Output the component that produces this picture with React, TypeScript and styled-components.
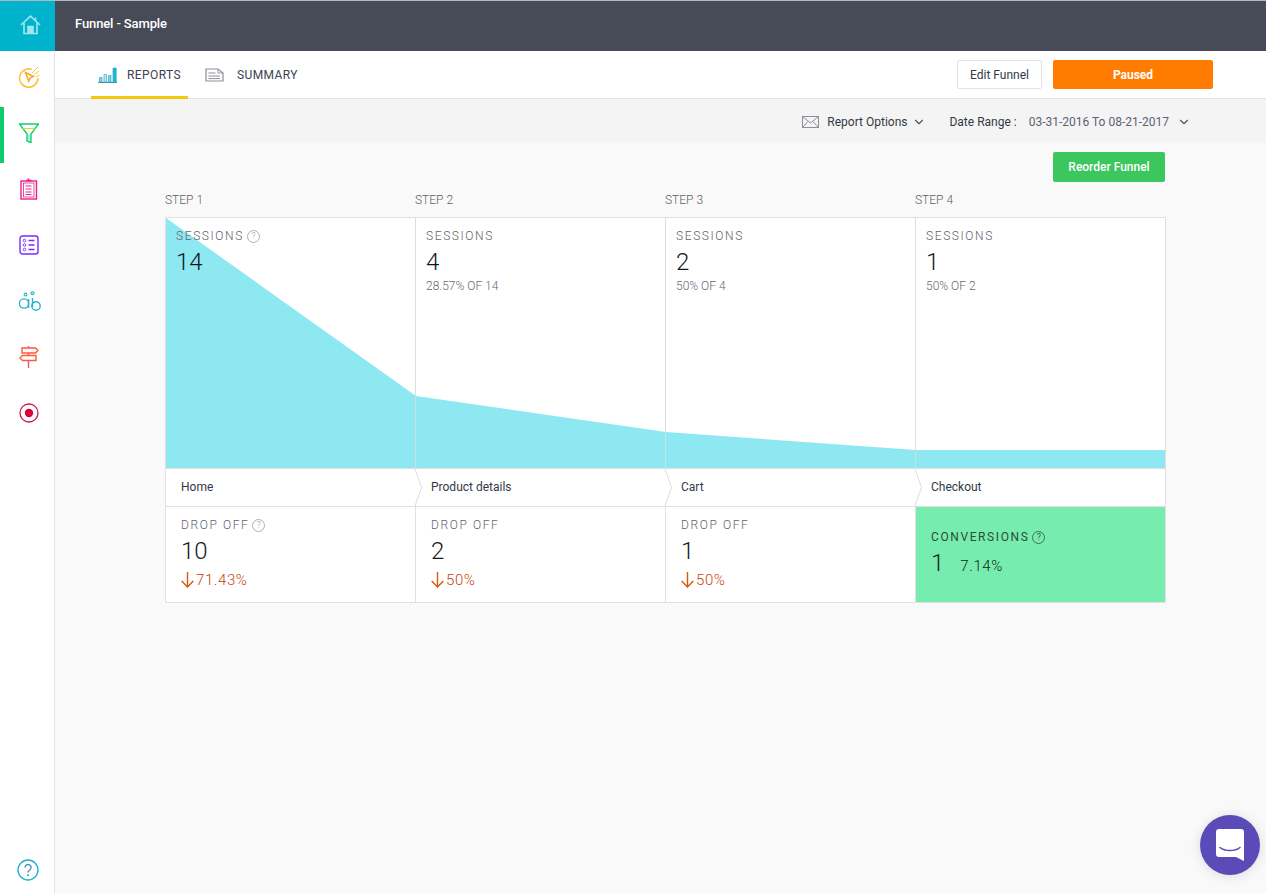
import React from 'react';
import styled, { createGlobalStyle } from 'styled-components';
import { ChevronDown } from 'lucide-react';

const GlobalStyle = createGlobalStyle`
    html, body {
        margin: 0;
        padding: 0;
        height: 100%;
        background: #f9f9f9;
        font-family: Roboto, "Liberation Sans", sans-serif;
        overflow: hidden;
    }
    * { box-sizing: border-box; }
`;

const Page = styled.div`
    display: flex;
    width: 1266px;
    height: 893px;
    border-top: 1px solid #b5b7bb;
`;

const Sidebar = styled.nav`
    width: 55px;
    flex: none;
    display: flex;
    flex-direction: column;
    background: #fff;
    border-right: 1px solid #e4e4e4;
`;

const HomeLink = styled.div`
    height: 50px;
    margin-right: -1px;
    padding: 0 0 2px 5px;
    background: #00b2cc;
    display: flex;
    align-items: center;
    justify-content: center;
`;

const NavItem = styled.div<{ $active?: boolean }>`
    height: 56px;
    display: flex;
    align-items: center;
    justify-content: center;
    border-left: 4px solid ${p => (p.$active ? '#0ccb6b' : 'transparent')};
    padding-bottom: 4px;
`;

const SidebarSpacer = styled.div`
    flex: 1;
`;

const HelpLink = styled.div`
    height: 34px;
    padding-left: 2px;
    display: flex;
    align-items: flex-start;
    justify-content: center;
`;

const Main = styled.main`
    flex: 1;
    min-width: 0;
    display: flex;
    flex-direction: column;
`;

const Header = styled.header`
    height: 50px;
    background: #464b57;
    color: #fff;
    display: flex;
    align-items: center;
    padding: 0 0 6px 20px;
    font-size: 13px;
    font-weight: 500;
    letter-spacing: -0.12px;
`;

const TabBar = styled.div`
    height: 48px;
    background: #fff;
    border-bottom: 1px solid #e2e2e2;
    display: flex;
    align-items: stretch;
    padding: 0 53px 0 36px;
`;

const Tab = styled.div<{ $active?: boolean; $gap: number }>`
    display: flex;
    align-items: center;
    gap: ${p => p.$gap}px;
    padding: 3px 7px 0;
    margin-right: 10px;
    font-size: 12px;
    letter-spacing: 0.4px;
    color: #3c4250;
    border-bottom: 3px solid ${p => (p.$active ? '#f3c80f' : 'transparent')};
    margin-bottom: -1px;
`;

const TabActions = styled.div`
    margin-left: auto;
    display: flex;
    align-items: center;
    gap: 11px;
    padding-bottom: 1px;
`;

const EditButton = styled.button`
    width: 85px;
    height: 29px;
    padding: 2px 0 0;
    background: #fff;
    border: 1px solid #e2e2e2;
    border-radius: 2px;
    font: 400 12px Roboto, sans-serif;
    color: #333a47;
`;

const StatusButton = styled.button`
    width: 160px;
    height: 29px;
    padding: 2px 0 0;
    background: #ff7c00;
    border: none;
    border-radius: 2px;
    font: 700 12px Roboto, sans-serif;
    color: #fff;
`;

const FilterBar = styled.div`
    height: 43px;
    background: #f4f4f4;
    display: flex;
    align-items: center;
    justify-content: flex-end;
    padding: 2px 75px 0 0;
    font-size: 12px;
    color: #333a47;
`;

const FilterItem = styled.div`
    display: flex;
    align-items: center;
`;

const MailIcon = styled.svg`
    margin-right: 8px;
`;

const ReportChevron = styled(ChevronDown)`
    margin-left: 5px;
    color: #555;
`;

const DateChevron = styled(ChevronDown)`
    margin-left: 8px;
    color: #555;
`;

const DateLabel = styled.span`
    margin-left: 23px;
    margin-right: 12px;
`;

const DateValue = styled.span`
    color: #5d6270;
`;

const Content = styled.section`
    flex: 1;
    padding: 10px 101px 0 110px;
`;

const ContentActions = styled.div`
    display: flex;
    justify-content: flex-end;
`;

const ReorderButton = styled.button`
    width: 112px;
    height: 30px;
    background: #3cc65e;
    border: none;
    border-radius: 2px;
    font: 500 12px Roboto, sans-serif;
    color: #fff;
`;

const StepLabels = styled.div`
    display: grid;
    grid-template-columns: repeat(4, 250px);
    height: 35px;
    align-items: flex-end;
    padding-bottom: 10px;
`;

const StepLabel = styled.div`
    font-size: 12px;
    font-weight: 300;
    line-height: 14px;
    color: #5f5f5f;
`;

const Table = styled.div`
    position: relative;
    width: 1001px;
    border: 1px solid #e0e0e0;
    background: #fff;
`;

const ChartFill = styled.svg`
    position: absolute;
    left: 0;
    top: 0;
`;

const Row = styled.div<{ $height: number }>`
    position: relative;
    display: grid;
    grid-template-columns: 249px 250px 250px 250px;
    height: ${p => p.$height}px;
`;

const SessionCell = styled.div`
    padding: 11px 10px 0 10px;
    & + & {
        border-left: 1px solid rgba(215, 218, 220, 0.9);
    }
`;

const CellLabel = styled.div<{ $dark?: boolean }>`
    display: flex;
    align-items: center;
    gap: 3px;
    font-size: 12px;
    font-weight: ${p => (p.$dark ? 400 : 300)};
    line-height: 14px;
    letter-spacing: 1.6px;
    color: ${p => (p.$dark ? '#2e4a3a' : '#5f636b')};
`;

const HintIcon = styled.span<{ $dark?: boolean }>`
    width: 13px;
    height: 13px;
    border: 1px solid ${p => (p.$dark ? '#4b6b58' : '#b0b0b0')};
    border-radius: 50%;
    font-size: 9px;
    line-height: 11px;
    text-align: center;
    letter-spacing: 0;
    color: ${p => (p.$dark ? '#3d5c4a' : '#a0a0a0')};
`;

const BigNumber = styled.div`
    margin-top: 5px;
    font-size: 24px;
    font-weight: 300;
    line-height: 28px;
    color: #14181d;
`;

const SubText = styled.div`
    margin-top: 3px;
    font-size: 12px;
    font-weight: 300;
    line-height: 14px;
    color: #666a70;
`;

const LabelRow = styled(Row)`
    border-top: 1px solid #e0e0e0;
    border-bottom: 1px solid #e0e0e0;
`;

const PageLabel = styled.div<{ $first?: boolean }>`
    position: relative;
    display: flex;
    align-items: center;
    padding: 0 0 2px ${p => (p.$first ? 15 : 16)}px;
    font-size: 12px;
    color: #333a47;
`;

const Chevron = styled.svg`
    position: absolute;
    left: -1px;
    top: 0;
`;

const DropCell = styled.div`
    padding: 11px 15px 0 15px;
    & + & {
        border-left: 1px solid #e0e0e0;
    }
`;

const DropPercent = styled.div`
    margin-top: 5px;
    display: flex;
    align-items: center;
    gap: 2px;
    font-size: 15px;
    font-weight: 300;
    line-height: 20px;
    color: #c93f08;
    letter-spacing: 0.6px;
`;

const ConversionCell = styled.div`
    padding: 23px 15px 0 15px;
    background: #76edae;
    border-left: 1px solid #e0e0e0;
`;

const ConversionValues = styled.div`
    display: flex;
    align-items: baseline;
    margin-top: 5px;
    line-height: 28px;
    font-size: 24px;
    font-weight: 300;
    color: #14261d;
`;

const ConversionPercent = styled.span`
    margin-left: 16px;
    font-size: 15px;
    font-weight: 300;
    letter-spacing: 0.6px;
`;

const ChatBubble = styled.div`
    position: fixed;
    right: 6px;
    bottom: 18px;
    width: 60px;
    height: 60px;
    border-radius: 50%;
    background: #5a4bb8;
    box-shadow: 0 1px 12px rgba(0, 0, 0, 0.12);
    display: flex;
    align-items: center;
    justify-content: center;
`;

const HomeIcon = () => (
    <svg width="21" height="20" viewBox="0 0 21 20" fill="none" stroke="#9fe6f0" strokeWidth="1.6">
        <path d="M1 10 10.5 1.2 20 10" />
        <path d="M4 8v10.5h13V8" />
        <path d="M8 18.5V11.5h5v7" fill="#9fe6f0" />
        <path d="M15.5 2.5v3" />
    </svg>
);

const GoalIcon = () => (
    <svg width="22" height="22" viewBox="0 0 22 22" fill="none" stroke="#fdc12f" strokeWidth="1.5">
        <path d="M14 3.4A9.2 9.2 0 1 0 20 12" />
        <path d="M7.5 6.5l8 4-3.3 1.3-1.4 3.4z" stroke="#f9a52a" />
        <path d="M14 7l6-6M16.5 8.5 21 5M18 11l3.5-2" strokeWidth="1" />
    </svg>
);

const FunnelIcon = () => (
    <svg width="20" height="20" viewBox="0 0 20 20" fill="none" stroke="#0fcf6e" strokeWidth="1.4">
        <path d="M.5 1h19l-7.5 10v8.5l-4-1.5v-7z" />
        <path d="M4 5.5h12" stroke="#e4d52c" strokeWidth="1.2" />
        <path d="M10 11.5v6" stroke="#5fd8e0" strokeWidth="1.2" />
    </svg>
);

const ClipboardIcon = () => (
    <svg width="18" height="22" viewBox="0 0 18 22" fill="none" stroke="#ec1e8b" strokeWidth="1.4">
        <rect x="1" y="3" width="15.5" height="18" />
        <rect x="3.5" y="5" width="10.5" height="14" strokeWidth="0.8" />
        <path d="M6 2.5h5.5M8.5.5v2" strokeWidth="1.6" />
        <path d="M5.5 8h6M5.5 11h6M5.5 14h6M5.5 16.5h6" strokeWidth="1" />
    </svg>
);

const SurveyIcon = () => (
    <svg width="20" height="20" viewBox="0 0 20 20" fill="none" stroke="#7a2cff" strokeWidth="1.4">
        <rect x="1" y="1" width="18" height="18" rx="2.5" />
        <circle cx="5.5" cy="5.5" r="1.3" strokeWidth="0.9" />
        <circle cx="5.5" cy="10" r="1.3" strokeWidth="0.9" />
        <circle cx="5.5" cy="14.5" r="1.3" strokeWidth="0.9" />
        <path d="M9.5 5.5h6M9.5 10h6M9.5 14.5h6" />
    </svg>
);

const AbIcon = () => (
    <svg width="23" height="22" viewBox="0 0 23 22" fill="none" stroke="#28b3cc" strokeWidth="1.4">
        <circle cx="6" cy="13.5" r="4.6" />
        <path d="M10.6 9v9" />
        <path d="M14.5 8v9" />
        <circle cx="18" cy="16" r="4.2" />
        <circle cx="7.5" cy="4.5" r="1.4" strokeWidth="1.1" />
        <circle cx="14.5" cy="3.2" r="1.6" fill="#8fdde8" strokeWidth="1" />
    </svg>
);

const SignpostIcon = () => (
    <svg width="20" height="22" viewBox="0 0 20 22" fill="none" stroke="#ff5a32" strokeWidth="1.4">
        <path d="M3 2h13.5l2.5 2.5L16.5 7H3z" />
        <path d="M17 9.5H3.5L1 12l2.5 2.5H17z" />
        <path d="M9.5 0v2M9.5 7v2.5M9.5 14.5V22" stroke="#f5508a" />
    </svg>
);

const RecordIcon = () => (
    <svg width="20" height="20" viewBox="0 0 20 20">
        <circle cx="10" cy="10" r="9" fill="none" stroke="#d8124d" strokeWidth="1.3" />
        <circle cx="10" cy="10" r="4.2" fill="#d8003c" />
    </svg>
);

const HelpIcon = () => (
    <svg width="22" height="22" viewBox="0 0 22 22">
        <circle cx="11" cy="11" r="10" fill="none" stroke="#1fb4d2" strokeWidth="1.4" />
        <path d="M8 8.4a3 3 0 1 1 4.6 2.6c-1 .7-1.6 1.2-1.6 2.5" fill="none" stroke="#4a8fa6" strokeWidth="1.4" />
        <circle cx="11" cy="16.2" r="1" fill="#4a8fa6" />
    </svg>
);

const ReportsIcon = () => (
    <svg width="20" height="16" viewBox="0 0 20 16" fill="none">
        <path d="M0 15.4h19" stroke="#3a7f92" strokeWidth="1" />
        <path d="M1.5 15V10.5h2.5V15z" fill="#7fd0e0" stroke="#2cb0cc" strokeWidth="0.7" />
        <path d="M6 15V7.5h2.5V15z" fill="#bfe9f1" stroke="#2cb0cc" strokeWidth="0.7" />
        <path d="M10.5 15V8.5h2.5V15z" fill="#7fd0e0" stroke="#2cb0cc" strokeWidth="0.7" />
        <path d="M15 15V1h3.2v14z" fill="#1fb4d2" stroke="#2cb0cc" strokeWidth="0.7" />
    </svg>
);

const SummaryIcon = () => (
    <svg width="19" height="14" viewBox="0 0 19 14" fill="none" stroke="#8a8f99" strokeWidth="1.2">
        <path d="M1 1h12l5 4v8H1z" />
        <path d="M13 1v4h5" strokeWidth="0.9" />
        <path d="M3.5 5h7M3.5 8h11.5M3.5 10.6h11.5" strokeWidth="1" />
    </svg>
);

const DropArrow = () => (
    <svg width="13" height="16" viewBox="0 0 13 16" fill="none" stroke="#d9570f" strokeWidth="1.4">
        <path d="M6.5 0v15M.7 9l5.8 6 5.8-6" />
    </svg>
);

const steps = [
    { name: 'Home', sessions: 14, sub: '', drop: 10, dropPct: '71.43%' },
    { name: 'Product details', sessions: 4, sub: '28.57% OF 14', drop: 2, dropPct: '50%' },
    { name: 'Cart', sessions: 2, sub: '50% OF 4', drop: 1, dropPct: '50%' },
    { name: 'Checkout', sessions: 1, sub: '50% OF 2', drop: null, dropPct: '' },
];

const App = () => {
    return (
        <>
            <GlobalStyle />
            <Page>
                <Sidebar>
                    <HomeLink>
                        <HomeIcon />
                    </HomeLink>
                    <NavItem><GoalIcon /></NavItem>
                    <NavItem $active><FunnelIcon /></NavItem>
                    <NavItem><ClipboardIcon /></NavItem>
                    <NavItem><SurveyIcon /></NavItem>
                    <NavItem><AbIcon /></NavItem>
                    <NavItem><SignpostIcon /></NavItem>
                    <NavItem><RecordIcon /></NavItem>
                    <SidebarSpacer />
                    <HelpLink><HelpIcon /></HelpLink>
                </Sidebar>
                <Main>
                    <Header>Funnel - Sample</Header>
                    <TabBar>
                        <Tab $active $gap={9}>
                            <ReportsIcon />
                            REPORTS
                        </Tab>
                        <Tab $gap={13}>
                            <SummaryIcon />
                            SUMMARY
                        </Tab>
                        <TabActions>
                            <EditButton>Edit Funnel</EditButton>
                            <StatusButton>Paused</StatusButton>
                        </TabActions>
                    </TabBar>
                    <FilterBar>
                        <FilterItem>
                            <MailIcon width="17" height="12" viewBox="0 0 17 12" fill="none" stroke="#8a8f99" strokeWidth="1">
                                <rect x="0.5" y="0.5" width="16" height="11" />
                                <path d="M.5.5 8.5 7l8-6.5M.5 11.5 6 5.5M16.5 11.5 11 5.5" />
                            </MailIcon>
                            Report Options
                            <ReportChevron size={14} />
                        </FilterItem>
                        <FilterItem>
                            <DateLabel>Date Range :</DateLabel>
                            <DateValue>03-31-2016 To 08-21-2017</DateValue>
                            <DateChevron size={14} />
                        </FilterItem>
                    </FilterBar>
                    <Content>
                        <ContentActions>
                            <ReorderButton>Reorder Funnel</ReorderButton>
                        </ContentActions>
                        <StepLabels>
                            {steps.map((s, i) => (
                                <StepLabel key={s.name}>STEP {i + 1}</StepLabel>
                            ))}
                        </StepLabels>
                        <Table>
                            <ChartFill width="999" height="250" viewBox="0 0 999 250">
                                <path d="M0 0 250 178 500 214 750 232 999 232V250H0Z" fill="#8ee8f2" />
                            </ChartFill>
                            <Row $height={250}>
                                {steps.map((s, i) => (
                                    <SessionCell key={s.name}>
                                        <CellLabel>
                                            SESSIONS
                                            {i === 0 && <HintIcon>?</HintIcon>}
                                        </CellLabel>
                                        <BigNumber>{s.sessions}</BigNumber>
                                        {s.sub && <SubText>{s.sub}</SubText>}
                                    </SessionCell>
                                ))}
                            </Row>
                            <LabelRow $height={39}>
                                {steps.map((s, i) => (
                                    <PageLabel key={s.name} $first={i === 0}>
                                        {i > 0 && (
                                            <Chevron width="9" height="37" viewBox="0 0 9 37" fill="none" stroke="#dcdcdc">
                                                <path d="M1 0 7.5 18.5 1 37" />
                                            </Chevron>
                                        )}
                                        {s.name}
                                    </PageLabel>
                                ))}
                            </LabelRow>
                            <Row $height={95}>
                                {steps.slice(0, 3).map((s, i) => (
                                    <DropCell key={s.name}>
                                        <CellLabel>
                                            DROP OFF
                                            {i === 0 && <HintIcon>?</HintIcon>}
                                        </CellLabel>
                                        <BigNumber>{s.drop}</BigNumber>
                                        <DropPercent>
                                            <DropArrow />
                                            {s.dropPct}
                                        </DropPercent>
                                    </DropCell>
                                ))}
                                <ConversionCell>
                                    <CellLabel $dark>
                                        CONVERSIONS
                                        <HintIcon $dark>?</HintIcon>
                                    </CellLabel>
                                    <ConversionValues>
                                        1<ConversionPercent>7.14%</ConversionPercent>
                                    </ConversionValues>
                                </ConversionCell>
                            </Row>
                        </Table>
                    </Content>
                </Main>
            </Page>
            <ChatBubble>
                <svg width="28" height="32" viewBox="0 0 28 32">
                    <path d="M3 0h22a3 3 0 0 1 3 3v29l-8-4H3a3 3 0 0 1-3-3V3a3 3 0 0 1 3-3z" fill="#fff" />
                    <path d="M4 18.5c5 4 15 4 20 0" fill="none" stroke="#5a4bb8" strokeWidth="1.6" strokeLinecap="round" />
                </svg>
            </ChatBubble>
        </>
    );
};

export default App;
